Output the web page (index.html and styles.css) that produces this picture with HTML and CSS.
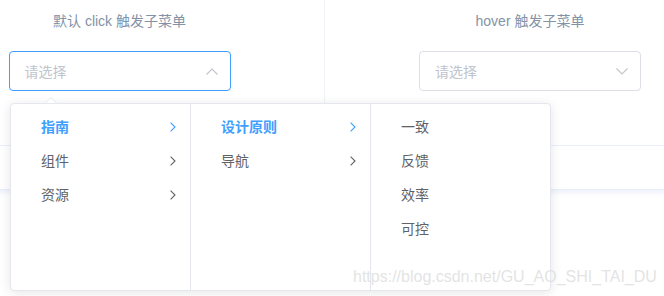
FILE: index.html
```html
<!DOCTYPE html>
<html lang="zh">
<head>
<meta charset="utf-8">
<link rel="stylesheet" href="styles.css">
</head>
<body>
<div class="page">
  <div class="demo">
    <div class="source">
      <div class="block block-left">
        <span class="demonstration">默认 click 触发子菜单</span>
        <div class="select is-focus">
          <span class="placeholder">请选择</span>
          <svg class="caret" width="12" height="7" viewBox="0 0 12 7"><polyline points="0.5,6.5 6,1 11.5,6.5" fill="none" stroke="#C0C4CC" stroke-width="1.1"/></svg>
        </div>
      </div>
      <div class="block">
        <span class="demonstration">hover 触发子菜单</span>
        <div class="select">
          <span class="placeholder">请选择</span>
          <svg class="caret" width="12" height="7" viewBox="0 0 12 7"><polyline points="0.5,0.5 6,6 11.5,0.5" fill="none" stroke="#C0C4CC" stroke-width="1.1"/></svg>
        </div>
      </div>
    </div>
    <div class="control"></div>
  </div>

  <div class="popper">
    <div class="arrow"></div>
    <div class="panel">
      <ul class="menu">
        <li class="node active"><span>指南</span><svg class="chev" width="6" height="10" viewBox="0 0 6 10"><polyline points="0.6,0.6 5,5 0.6,9.4" fill="none" stroke="currentColor" stroke-width="1.1"/></svg></li>
        <li class="node"><span>组件</span><svg class="chev" width="6" height="10" viewBox="0 0 6 10"><polyline points="0.6,0.6 5,5 0.6,9.4" fill="none" stroke="currentColor" stroke-width="1.1"/></svg></li>
        <li class="node"><span>资源</span><svg class="chev" width="6" height="10" viewBox="0 0 6 10"><polyline points="0.6,0.6 5,5 0.6,9.4" fill="none" stroke="currentColor" stroke-width="1.1"/></svg></li>
      </ul>
      <ul class="menu">
        <li class="node active"><span>设计原则</span><svg class="chev" width="6" height="10" viewBox="0 0 6 10"><polyline points="0.6,0.6 5,5 0.6,9.4" fill="none" stroke="currentColor" stroke-width="1.1"/></svg></li>
        <li class="node"><span>导航</span><svg class="chev" width="6" height="10" viewBox="0 0 6 10"><polyline points="0.6,0.6 5,5 0.6,9.4" fill="none" stroke="currentColor" stroke-width="1.1"/></svg></li>
      </ul>
      <ul class="menu last">
        <li class="node"><span>一致</span></li>
        <li class="node"><span>反馈</span></li>
        <li class="node"><span>效率</span></li>
        <li class="node"><span>可控</span></li>
      </ul>
    </div>
  </div>

  <div class="watermark">https://blog.csdn.net/GU_AO_SHI_TAI_DU</div>
</div>
</body>
</html>
```

FILE: styles.css
```css
html, body {
  margin: 0;
  padding: 0;
  background: #fff;
  overflow: hidden;
}
body {
  width: 664px;
  height: 296px;
  font-family: "Liberation Sans", "Noto Sans CJK SC", sans-serif;
  font-size: 14px;
}
.page {
  position: relative;
  width: 664px;
  height: 296px;
  overflow: hidden;
}
.demo {
  margin-left: -85px;
  width: 840px;
  border-bottom: 1px solid #eaeefb;
  box-shadow: 0 2px 4px 0 rgba(232, 237, 250, 0.7), 0 0 8px 0 rgba(232, 237, 250, 0.6);
}
.source {
  display: flex;
}
.block {
  width: 410px;
  box-sizing: border-box;
  padding: 11px 0 54px;
  display: flex;
  flex-direction: column;
  align-items: center;
}
.block-left {
  border-right: 1px solid #eff2f6;
}
.demonstration {
  display: block;
  color: #8492a6;
  font-size: 14px;
  line-height: 20px;
  margin-bottom: 20px;
}
.select {
  width: 222px;
  height: 40px;
  box-sizing: border-box;
  border: 1px solid #dcdfe6;
  border-radius: 4px;
  display: flex;
  align-items: center;
  justify-content: space-between;
  padding: 0 12px 0 15px;
}
.select.is-focus {
  border-color: #409eff;
}
.placeholder {
  color: #c0c4cc;
  font-size: 14px;
}
.caret {
  display: block;
}
.control {
  height: 43px;
  border-top: 1px solid #eaeefb;
}

.popper {
  position: absolute;
  left: 10px;
  top: 103px;
}
.arrow {
  position: absolute;
  left: 35px;
  top: -6px;
  width: 0;
  height: 0;
  border-left: 6px solid transparent;
  border-right: 6px solid transparent;
  border-bottom: 6px solid #e4e7ed;
}
.arrow::after {
  content: "";
  position: absolute;
  left: -5px;
  top: 1px;
  border-left: 5px solid transparent;
  border-right: 5px solid transparent;
  border-bottom: 5px solid #fff;
}
.panel {
  display: flex;
  background: #fff;
  border: 1px solid #e4e7ed;
  border-radius: 4px;
  box-shadow: 0 2px 12px 0 rgba(0, 0, 0, 0.1);
  height: 186px;
}
.menu {
  list-style: none;
  margin: 0;
  padding: 6px 0;
  width: 179px;
  border-right: 1px solid #e4e7ed;
}
.menu.last {
  border-right: none;
}
.node {
  height: 34px;
  line-height: 34px;
  display: flex;
  align-items: center;
  justify-content: space-between;
  padding: 0 14px 0 30px;
  color: #606266;
  font-size: 14px;
}
.node.active {
  color: #409eff;
  font-weight: bold;
}
.chev {
  display: block;
}

.watermark {
  position: absolute;
  left: 353px;
  top: 268px;
  font-family: "Liberation Sans", sans-serif;
  font-size: 16px;
  color: rgba(222, 222, 222, 0.85);
  white-space: nowrap;
}
```
